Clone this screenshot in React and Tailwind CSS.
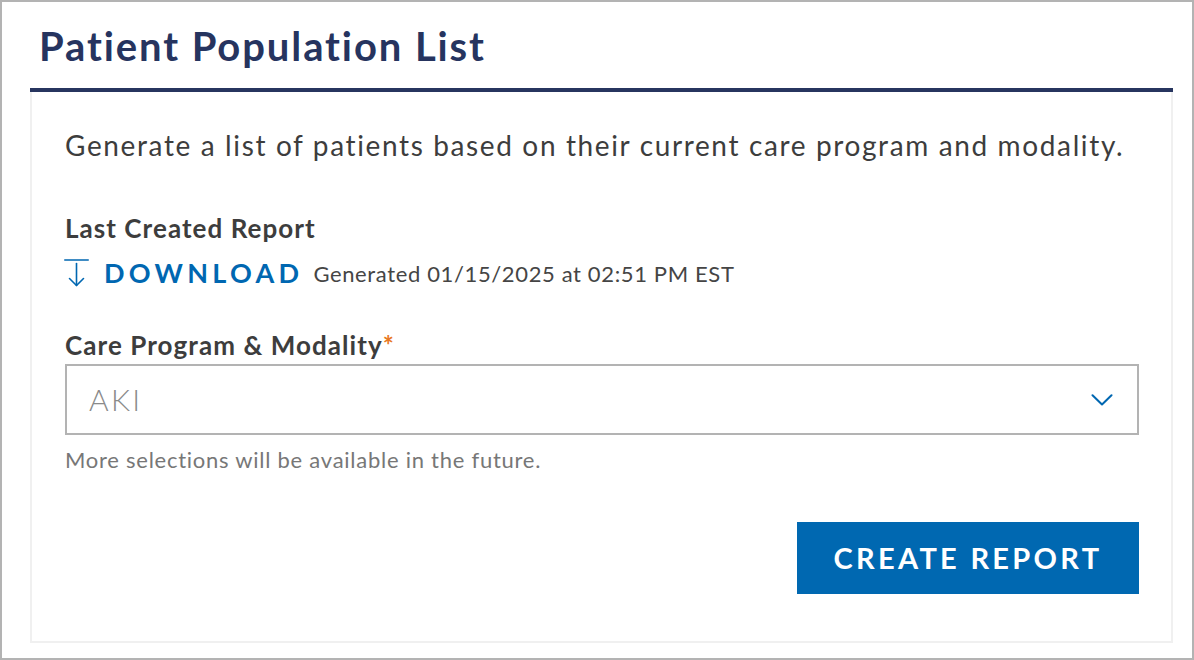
import React from "react";

function DownloadIcon() {
  return (
    <svg width="25" height="28" viewBox="0 0 25 28" fill="none" stroke="#0067b1" strokeWidth="1.6" strokeLinecap="round" strokeLinejoin="round" className="-ml-px">
      <line x1="0.8" y1="1" x2="24.2" y2="1" />
      <line x1="12.5" y1="4.5" x2="12.5" y2="26.5" />
      <polyline points="5.5,19.5 12.5,26.5 19.5,19.5" />
    </svg>
  );
}

function Chevron() {
  return (
    <svg width="22" height="12" viewBox="0 0 22 12" fill="none" stroke="#0067b1" strokeWidth="2" strokeLinecap="round" strokeLinejoin="round">
      <polyline points="1.5,1.2 11,10.5 20.5,1.2" />
    </svg>
  );
}

export default function App() {
  return (
    <div className="w-[1194px] h-[660px] bg-white border-2 border-[#b3b3b3] font-['Lato',sans-serif] flex flex-col">
      <h1 className="ml-[37px] mt-[20px] text-[40px] leading-[48px] font-bold tracking-[1.9px] text-[#26345f]">
        Patient Population List
      </h1>
      <div className="ml-[28px] mr-[19px] mt-[18px] border-t-4 border-t-[#27355f] flex-1 mb-[15px]">
        <div className="border-2 border-t-0 border-[#f0f0f0] h-full pl-[33px] pr-[32px] pt-[35px]">
          <p className="text-[28px] leading-[36px] tracking-[1.63px] text-[#3d3d3d]">
            Generate a list of patients based on their current care program and modality.
          </p>
          <div className="mt-[50px] text-[26px] leading-[30px] font-bold tracking-[1.05px] text-[#3d3d3d]">Last Created Report</div>
          <div className="mt-[15px] h-[30px] flex items-center">
            <DownloadIcon />
            <span className="ml-[15px] text-[27px] font-bold tracking-[4.3px] text-[#0067b1]">DOWNLOAD</span>
            <span className="ml-[10px] text-[22px] tracking-[0.63px] text-[#454545]">Generated 01/15/2025 at 02:51 PM EST</span>
          </div>
          <div className="mt-[42px] text-[26px] leading-[30px] font-bold tracking-[1.07px] text-[#3d3d3d]">
            Care Program &amp; Modality<span className="text-[#e87722]">*</span>
          </div>
          <div className="mt-[4px] h-[71px] border-2 border-[#b3b3b3] flex items-center justify-between pl-[22px] pr-[24px]">
            <span className="text-[30px] font-light tracking-[2.3px] text-[#8a8a8a]">AKI</span>
            <Chevron />
          </div>
          <div className="mt-[12px] text-[22px] leading-[26px] tracking-[0.74px] text-[#777777]">More selections will be available in the future.</div>
          <div className="mt-[49px] flex justify-end">
            <button className="w-[342px] h-[72px] bg-[#0068b1] text-white text-[29px] font-bold tracking-[3.3px]">
              CREATE REPORT
            </button>
          </div>
        </div>
      </div>
    </div>
  );
}
